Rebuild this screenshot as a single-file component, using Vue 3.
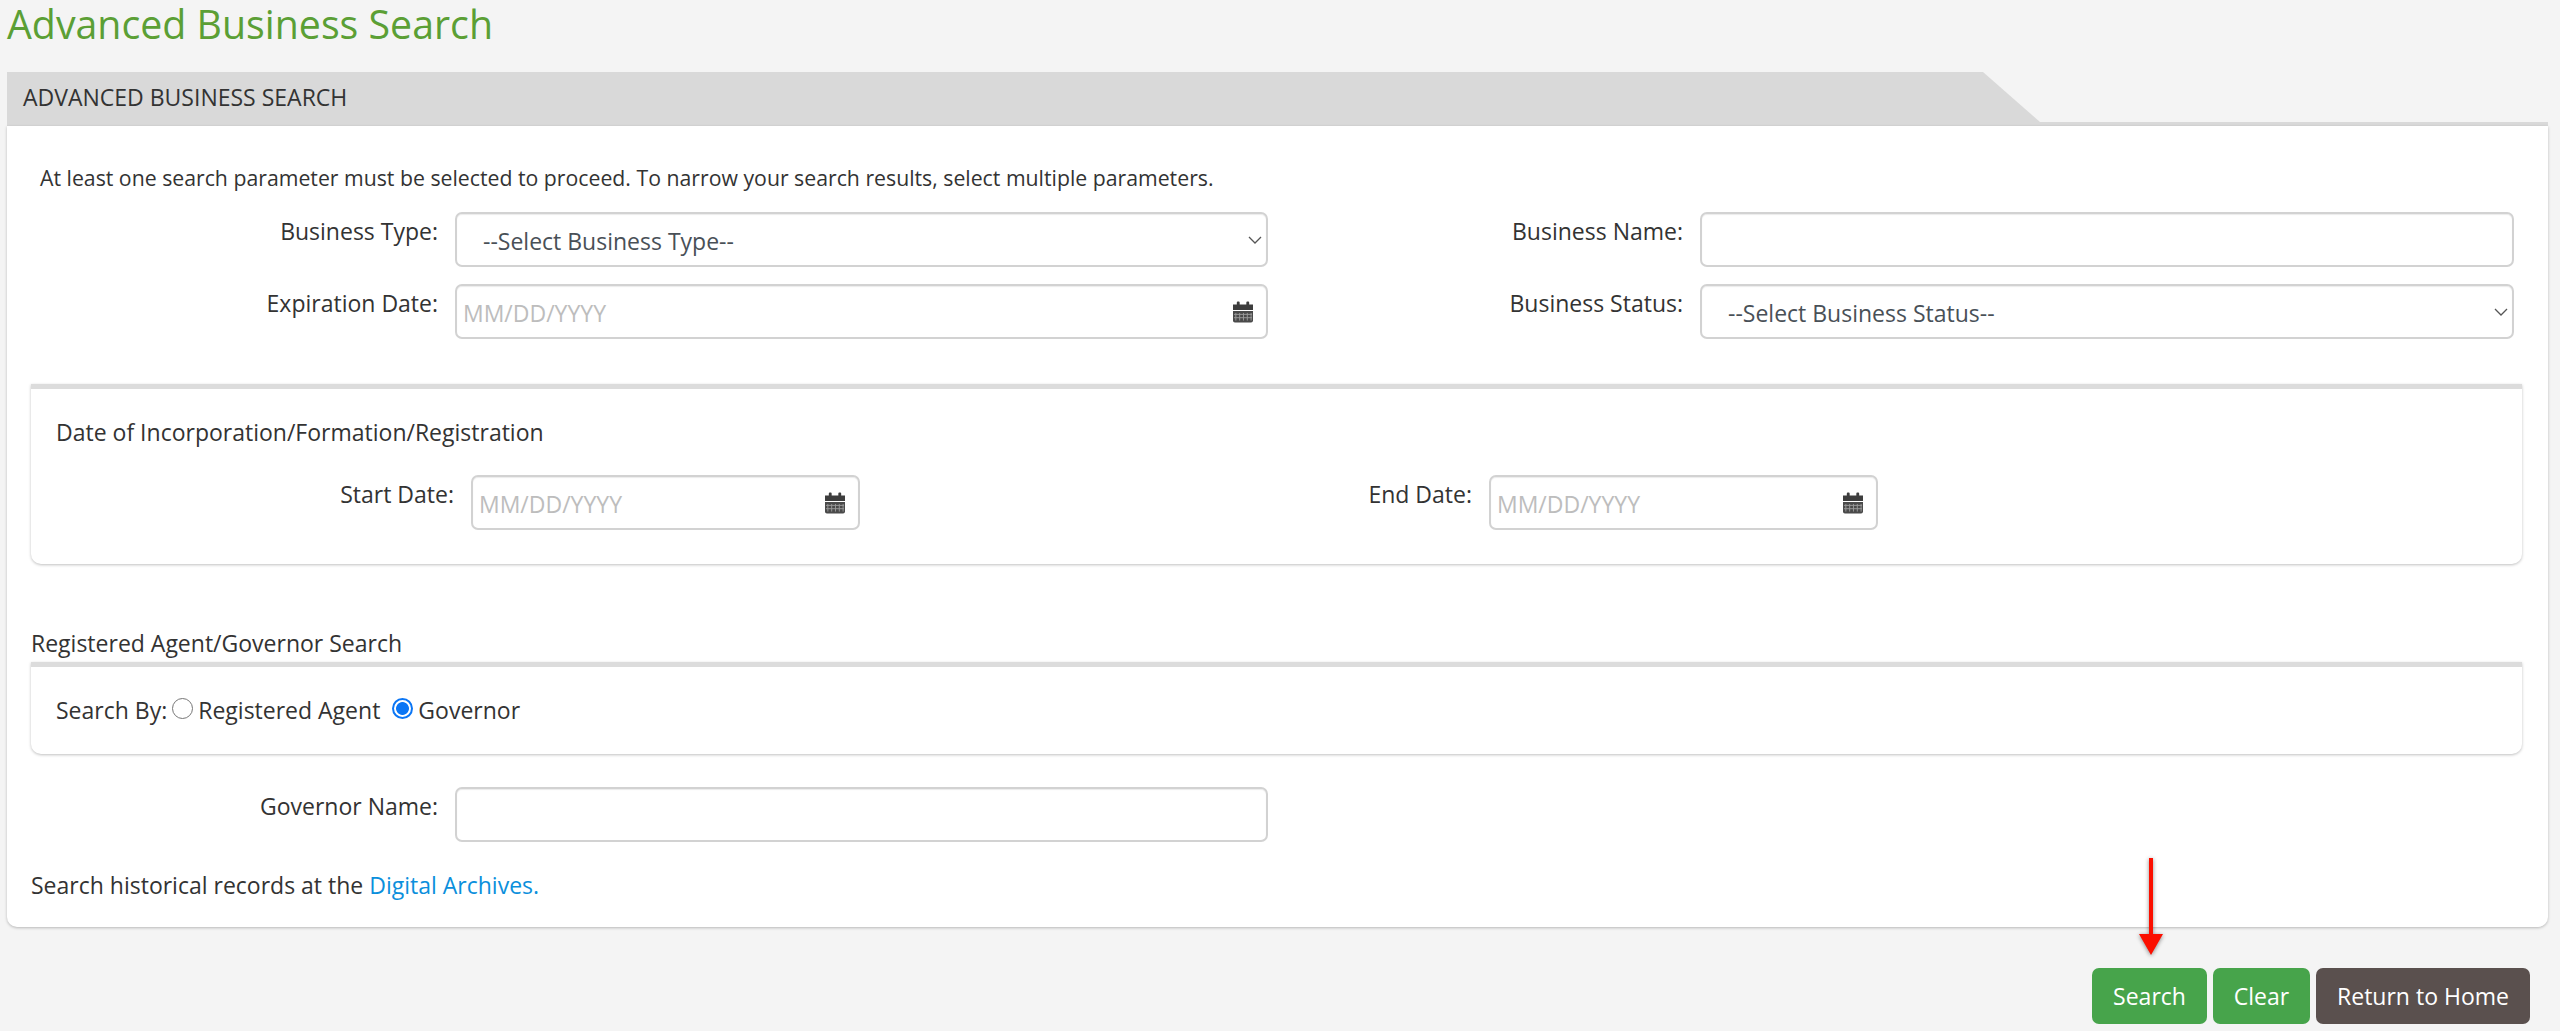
<script setup>
import { ref } from 'vue'

const searchBy = ref('governor')
</script>

<template>
  <div class="page">
    <h1 class="page-title">Advanced Business Search</h1>

    <div class="card-head">
      <div class="card-tab">ADVANCED BUSINESS SEARCH</div>
    </div>

    <div class="card-body">
      <p class="intro">At least one search parameter must be selected to proceed. To narrow your search results, select multiple parameters.</p>

      <div class="fields">
        <label class="lbl lbl-a">Business Type:</label>
        <div class="control">
          <select class="input select">
            <option>--Select Business Type--</option>
          </select>
          <svg class="chevron" viewBox="0 0 14 8"><path d="M1 1l6 6 6-6" fill="none" stroke="#555" stroke-width="1.3" /></svg>
        </div>
        <label class="lbl lbl-b">Business Name:</label>
        <div class="control"><input class="input" type="text" /></div>

        <label class="lbl lbl-a">Expiration Date:</label>
        <div class="control">
          <input class="input date" type="text" placeholder="MM/DD/YYYY" />
          <svg class="cal" viewBox="0 0 21 22">
            <path d="M0 3h4V1a1 1 0 0 1 1-1h1a1 1 0 0 1 1 1v2h7V1a1 1 0 0 1 1-1h1a1 1 0 0 1 1 1v2h4v6H0z" fill="#3d3d3d" />
            <path d="M0 10h21v10a2 2 0 0 1-2 2H2a2 2 0 0 1-2-2z" fill="#4a4a4a" />
            <path d="M3 12v8M7 12v8M11 12v8M15 12v8M19 12v8M1 13.5h19M1 17h19" stroke="#9a9a9a" stroke-width="1" />
          </svg>
        </div>
        <label class="lbl lbl-b">Business Status:</label>
        <div class="control">
          <select class="input select">
            <option>--Select Business Status--</option>
          </select>
          <svg class="chevron" viewBox="0 0 14 8"><path d="M1 1l6 6 6-6" fill="none" stroke="#555" stroke-width="1.3" /></svg>
        </div>
      </div>

      <section class="panel panel-dates">
        <div class="panel-title">Date of Incorporation/Formation/Registration</div>
        <div class="date-row">
          <label class="lbl lbl-a">Start Date:</label>
          <div class="control">
            <input class="input date" type="text" placeholder="MM/DD/YYYY" />
            <svg class="cal" viewBox="0 0 21 22">
              <path d="M0 3h4V1a1 1 0 0 1 1-1h1a1 1 0 0 1 1 1v2h7V1a1 1 0 0 1 1-1h1a1 1 0 0 1 1 1v2h4v6H0z" fill="#3d3d3d" />
              <path d="M0 10h21v10a2 2 0 0 1-2 2H2a2 2 0 0 1-2-2z" fill="#4a4a4a" />
              <path d="M3 12v8M7 12v8M11 12v8M15 12v8M19 12v8M1 13.5h19M1 17h19" stroke="#9a9a9a" stroke-width="1" />
            </svg>
          </div>
          <label class="lbl lbl-b">End Date:</label>
          <div class="control">
            <input class="input date" type="text" placeholder="MM/DD/YYYY" />
            <svg class="cal" viewBox="0 0 21 22">
              <path d="M0 3h4V1a1 1 0 0 1 1-1h1a1 1 0 0 1 1 1v2h7V1a1 1 0 0 1 1-1h1a1 1 0 0 1 1 1v2h4v6H0z" fill="#3d3d3d" />
              <path d="M0 10h21v10a2 2 0 0 1-2 2H2a2 2 0 0 1-2-2z" fill="#4a4a4a" />
              <path d="M3 12v8M7 12v8M11 12v8M15 12v8M19 12v8M1 13.5h19M1 17h19" stroke="#9a9a9a" stroke-width="1" />
            </svg>
          </div>
        </div>
      </section>

      <div class="agent-title">Registered Agent/Governor Search</div>
      <section class="panel panel-agent">
        <span>Search By:</span>
        <label class="radio-opt">
          <input v-model="searchBy" class="radio" type="radio" value="agent" />
          <span>Registered Agent</span>
        </label>
        <label class="radio-opt">
          <input v-model="searchBy" class="radio" type="radio" value="governor" />
          <span>Governor</span>
        </label>
      </section>

      <div class="governor-row">
        <label class="lbl lbl-a">Governor Name:</label>
        <div class="control"><input class="input" type="text" /></div>
      </div>

      <p class="archives">Search historical records at the <a href="#" class="link">Digital Archives.</a></p>
    </div>

    <div class="actions">
      <button class="btn btn-green" type="button">Search</button>
      <button class="btn btn-green" type="button">Clear</button>
      <button class="btn btn-dark" type="button">Return to Home</button>
    </div>

    <!-- annotation arrow drawn over the page -->
    <svg class="arrow" viewBox="0 0 28 100">
      <path d="M12 0h4v76h10L14 97 2 76h10z" fill="#fb0f00" />
    </svg>
  </div>
</template>

<style scoped>
.page {
  position: relative;
  height: 1031px;
  box-sizing: border-box;
  padding: 0 12px 0 7px;
  background: #f4f4f4;
  color: #333;
  font-family: "Open Sans", sans-serif;
  font-size: 23px;
  overflow: hidden;
}
.page-title {
  height: 72px;
  margin: 0;
  color: #5b9f35;
  font-size: 39.3px;
  font-weight: 400;
  line-height: 49px;
}
.card-head {
  height: 50px;
  border-bottom: 4px solid #d9d9d9;
}
.card-tab {
  width: 2033px;
  height: 50px;
  padding-left: 16px;
  box-sizing: border-box;
  background: #d9d9d9;
  clip-path: polygon(0 0, 1976px 0, 100% 100%, 0 100%);
  font-size: 23px;
  line-height: 50px;
}
.card-body {
  padding: 37px 26px 27px 24px;
  border-radius: 0 0 10px 10px;
  background: #fff;
  box-shadow: 0 1px 3px rgba(0, 0, 0, 0.25);
}
.intro {
  margin: 0 0 19px 9px;
  font-size: 21.25px;
  line-height: 30px;
}
.fields {
  display: grid;
  grid-template-columns: 424px 813px 432px 814px;
  row-gap: 17px;
  margin-bottom: 45px;
}
.lbl {
  padding-top: 4px;
  line-height: 30px;
  text-align: right;
}
.lbl-a {
  padding-right: 17px;
}
.lbl-b {
  padding-right: 17px;
}
.control {
  position: relative;
  height: 55px;
}
.input {
  width: 100%;
  height: 55px;
  box-sizing: border-box;
  border: 2px solid #d2d2d2;
  border-radius: 7px;
  background: #fff;
  box-shadow: inset 0 1px 1px rgba(0, 0, 0, 0.08);
  color: #495057;
  font-family: inherit;
  font-size: 23px;
  outline: none;
}
.select {
  padding: 3px 0 0 26px;
  appearance: none;
}
.date {
  padding: 3px 0 0 6px;
}
.date::placeholder {
  color: #bdbdbd;
  opacity: 1;
}
.chevron {
  position: absolute;
  top: 24px;
  right: 6px;
  width: 14px;
  height: 8px;
  pointer-events: none;
}
.cal {
  position: absolute;
  top: 17px;
  right: 15px;
  width: 20px;
  height: 22px;
}
.panel {
  border-top: 5px solid #dcdcdc;
  border-radius: 0 0 10px 10px;
  background: #fff;
  box-shadow: 0 1px 3px rgba(0, 0, 0, 0.25);
}
.panel-dates {
  height: 180px;
  box-sizing: border-box;
  padding: 28px 0 0 25px;
}
.panel-title {
  margin-bottom: 28px;
  line-height: 30px;
}
.date-row {
  display: grid;
  grid-template-columns: 415px 389px 629px 389px;
}
.agent-title {
  margin: 64px 0 4px;
  line-height: 30px;
}
.panel-agent {
  display: flex;
  align-items: center;
  gap: 5px;
  height: 92px;
  box-sizing: border-box;
  padding: 0 0 2px 25px;
  line-height: 30px;
}
.radio-opt {
  display: flex;
  align-items: center;
  gap: 5px;
  margin-right: 7px;
}
.radio {
  width: 21px;
  height: 21px;
  margin: 0 0 3px;
  border: 1.5px solid #767676;
  border-radius: 50%;
  appearance: none;
  background: #fff;
}
.radio:checked {
  border: 2px solid #0b76f5;
  background: radial-gradient(circle, #0b76f5 0 6px, #fff 6.8px);
}
.governor-row {
  display: grid;
  grid-template-columns: 424px 813px;
  margin-top: 33px;
}
.archives {
  margin: 28px 0 0;
  line-height: 30px;
}
.link {
  color: #0b8fdc;
  text-decoration: none;
}
.actions {
  display: flex;
  justify-content: flex-end;
  gap: 6px;
  margin-top: 41px;
  padding-right: 18px;
}
.btn {
  height: 56px;
  padding: 0;
  border: none;
  border-radius: 7px;
  color: #fff;
  font-family: inherit;
  font-size: 23px;
}
.btn-green {
  background: #47a44b;
}
.btn:nth-child(1) {
  width: 115px;
}
.btn:nth-child(2) {
  width: 97px;
}
.btn-dark {
  width: 214px;
  background: #5a504e;
}
.arrow {
  position: absolute;
  top: 858px;
  left: 2137px;
  width: 28px;
  height: 100px;
  filter: drop-shadow(0 1px 2px rgba(0, 0, 0, 0.45));
}
</style>

<style>
body {
  margin: 0;
  background: #f4f4f4;
}
</style>
